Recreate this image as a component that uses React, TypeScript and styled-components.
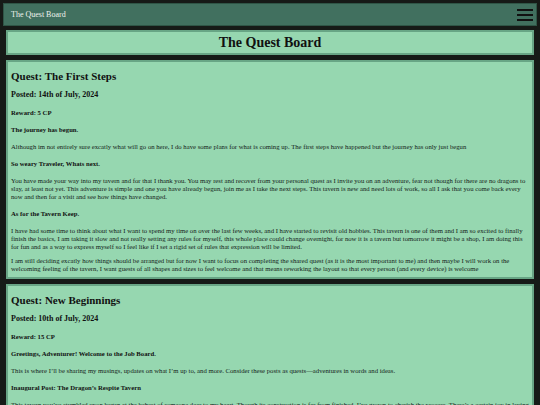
import styled, {createGlobalStyle} from 'styled-components';

const GlobalStyle = createGlobalStyle`
  html, body {
    margin: 0;
    padding: 0;
    background: #161a17;
  }
  body {
    font-family: "Liberation Serif", "Times New Roman", serif;
    color: #111;
  }
`;

type Section = {kind: 'h' | 'p'; text: string};

type Quest = {
    title: string;
    posted: string;
    reward: string;
    body: Section[];
};

const quests: Quest[] = [
    {
        title: 'Quest: The First Steps',
        posted: 'Posted: 14th of July, 2024',
        reward: 'Reward: 5 CP',
        body: [
            {kind: 'h', text: 'The journey has begun.'},
            {kind: 'p', text: 'Although im not entirely sure excatly what will go on here, I do have some plans for what is coming up. The first steps have happened but the journey has only just begun'},
            {kind: 'h', text: 'So weary Traveler, Whats next.'},
            {kind: 'p', text: 'You have made your way into my tavern and for that I thank you. You may rest and recover from your personal quest as I invite you on an adventure, fear not though for there are no dragons to slay, at least not yet. This adventure is simple and one you have already begun, join me as I take the next steps. This tavern is new and need lots of work, so all I ask that you come back every now and then for a visit and see how things have changed.'},
            {kind: 'h', text: 'As for the Tavern Keep.'},
            {kind: 'p', text: 'I have had some time to think about what I want to spend my time on over the last few weeks, and I have started to revisit old hobbies. This tavern is one of them and I am so excited to finally finish the basics, I am taking it slow and not really setting any rules for myself, this whole place could change overnight, for now it is a tavern but tomorrow it might be a shop, I am doing this for fun and as a way to express myself so I feel like if I set a rigid set of rules that expression will be limited.'},
            {kind: 'p', text: 'I am still deciding excatly how things should be arranged but for now I want to focus on completing the shared quest (as it is the most important to me) and then maybe I will work on the welcoming feeling of the tavern, I want guests of all shapes and sizes to feel welcome and that means reworking the layout so that every person (and every device) is welcome'},
        ],
    },
    {
        title: 'Quest: New Beginnings',
        posted: 'Posted: 10th of July, 2024',
        reward: 'Reward: 15 CP',
        body: [
            {kind: 'h', text: 'Greetings, Adventurer! Welcome to the Job Board.'},
            {kind: 'p', text: 'This is where I\u2019ll be sharing my musings, updates on what I\u2019m up to, and more. Consider these posts as quests\u2014adventures in words and ideas.'},
            {kind: 'h', text: 'Inaugural Post: The Dragon\u2019s Respite Tavern'},
            {kind: 'p', text: 'This tavern you\u2019ve stumbled upon began at the behest of someone dear to my heart. Though its construction is far from finished, I\u2019ve grown to cherish the process. There\u2019s a certain joy in laying each stone and raising each beam, and I hope you will find a warm seat by the hearth whenever you pass through.'},
        ],
    },
];

function App() {
    return (
        <>
            <GlobalStyle/>
            <Page>
                <NavBar>
                    <Brand>The Quest Board</Brand>
                    <MenuButton aria-label="menu">
                        <Bar/>
                        <Bar/>
                        <Bar/>
                    </MenuButton>
                </NavBar>

                <Main>
                    <Header>
                        <PageTitle>The Quest Board</PageTitle>
                    </Header>

                    {quests.map(q => (
                        <Card key={q.title}>
                            <QuestTitle>{q.title}</QuestTitle>
                            <Posted>{q.posted}</Posted>
                            <SubHead>{q.reward}</SubHead>
                            {q.body.map((s, i) => s.kind === 'h'
                                ? <SubHead key={i}>{s.text}</SubHead>
                                : <Text key={i}>{s.text}</Text>)}
                        </Card>
                    ))}
                </Main>
            </Page>
        </>
    );
}

export default App;


const Page = styled.div`
  padding: 3px 3px 0;
`;

const NavBar = styled.nav`
  display: flex;
  align-items: center;
  justify-content: space-between;
  height: 21px;
  padding: 0 3px 0 7px;
  background: #41705f;
  border: 1px solid #2f5546;
`;

const Brand = styled.span`
  font-size: 8px;
  color: #eef2ee;
`;

const MenuButton = styled.button`
  display: flex;
  flex-direction: column;
  justify-content: space-between;
  width: 16px;
  height: 12px;
  padding: 0;
  border: none;
  background: none;
`;

const Bar = styled.span`
  display: block;
  height: 2px;
  background: #111;
`;

const Main = styled.main`
  display: flex;
  flex-direction: column;
  gap: 5px;
  padding: 4px 3px 0;
`;

const Header = styled.header`
  display: flex;
  align-items: center;
  justify-content: center;
  height: 21px;
  background: #96d7b0;
  border: 2px solid #68a585;
`;

const PageTitle = styled.h1`
  margin: 0;
  font-size: 14px;
  line-height: 16px;
`;

const Card = styled.article`
  padding: 8px 3px 0;
  background: #96d7b0;
  border: 2px solid #68a585;

  & > :last-child {
    margin-bottom: 4px;
  }
`;

const QuestTitle = styled.h2`
  margin: 0 0 7px;
  font-size: 11px;
  line-height: 13px;
`;

const Posted = styled.h3`
  margin: 7px 0 8px;
  font-size: 8px;
  line-height: 10px;
`;

const SubHead = styled.h4`
  margin: 9px 0;
  font-size: 6.7px;
  line-height: 8px;
`;

const Text = styled.p`
  margin: 6px 0;
  font-size: 6.7px;
  line-height: 8px;
  color: #142219;
`;
